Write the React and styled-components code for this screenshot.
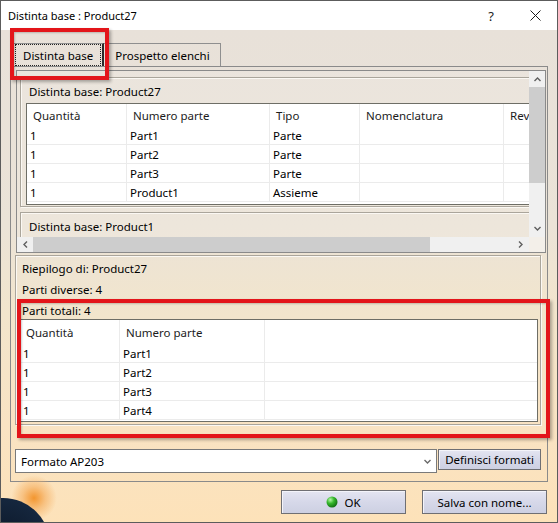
import React from 'react';
import styled, { createGlobalStyle } from 'styled-components';

const GlobalStyle = createGlobalStyle`
  html, body {
    margin: 0;
    padding: 0;
  }
  body {
    font-family: "Noto Sans", "Open Sans", sans-serif;
    font-size: 11.5px;
    color: #000;
  }
`;

const Window = styled.div`
  position: relative;
  width: 558px;
  height: 523px;
  box-sizing: border-box;
  border: 1px solid #5c5c5c;
  display: flex;
  flex-direction: column;
  overflow: hidden;
`;

const TitleBar = styled.div`
  height: 29px;
  flex-shrink: 0;
  background: #fff;
  display: flex;
  align-items: center;
  padding-left: 7px;
`;

const TitleText = styled.div`
  flex: 1;
  font-size: 11px;
`;

const TitleButton = styled.div`
  width: ${p => p.$w}px;
  height: 29px;
  display: flex;
  align-items: center;
  justify-content: center;
  font-size: 13px;
  color: #222;
`;

const Body = styled.div`
  flex: 1;
  display: flex;
  flex-direction: column;
  padding: 13px 9px 0;
  background: linear-gradient(180deg, #e8e1d9 0%, #ebe3d7 40%, #f2e5cc 58%, #f9e3c3 80%, #fde2b9 100%);
`;

const TabRow = styled.div`
  display: flex;
  margin-left: 3px;
  height: 23px;
`;

const Tab = styled.div`
  height: 23px;
  box-sizing: border-box;
  display: flex;
  align-items: center;
  padding: ${p => (p.$active ? '0 1px 0 1px' : '0 10px 0 11px')};
  border: 1px solid #8f8f8f;
  border-bottom: none;
  border-right: ${p => (p.$active ? '2px solid #2a2a2a' : '1px solid #8f8f8f')};
  ${p => !p.$active && 'border-left: none;'}
`;

const FocusLabel = styled.div`
  height: 20px;
  display: flex;
  align-items: center;
  padding: 0 7px;
  border: 1px dotted #222;
`;

const Panel = styled.div`
  height: 416px;
  box-sizing: border-box;
  border: 1px solid #8a8a8a;
  display: flex;
  flex-direction: column;
  padding: 3px 1px 0 5px;
`;

const ScrollArea = styled.div`
  height: 183px;
  box-sizing: border-box;
  border: 1px solid #8a8a8a;
  display: grid;
  grid-template-columns: 1fr 16px;
  grid-template-rows: 1fr 15px;
`;

const Viewport = styled.div`
  overflow: hidden;
  padding: 6px 0 0 3px;
  background: rgba(255, 255, 255, 0.12);
`;

const GroupList = styled.div`
  width: 620px;
  display: flex;
  flex-direction: column;
  gap: 5px;
`;

const Group = styled.div`
  border: 1px solid #aaa59b;
  box-shadow: inset 1px 1px 0 #fbf8f3, 1px 1px 0 #fbf8f3;
  padding: 0 ${p => p.$pr || 0}px ${p => p.$pb || 1}px ${p => p.$pl || 5}px;
`;

const GroupLabel = styled.div`
  height: 25px;
  box-sizing: border-box;
  padding: 6px 0 0 3px;
  line-height: 16px;
`;

const SummaryLabel = styled.div`
  height: ${p => (p.$short ? 19 : 21)}px;
  line-height: 21px;
  padding-left: 3px;
`;

const TableBox = styled.div`
  background: #fff;
  border: 1px solid #6e6e66;
  padding-bottom: ${p => p.$pb || 2}px;
  width: ${p => p.$width || 'auto'};
`;

const Row = styled.div`
  display: grid;
  grid-template-columns: ${p => p.$cols};
  height: ${p => p.$h}px;
  box-sizing: border-box;
  border-bottom: ${p => (p.$head ? 'none' : '1px solid #ebebeb')};
`;

const Cell = styled.div`
  display: flex;
  align-items: center;
  padding: ${p => (p.$head ? '0 0 0 6px' : '1px 0 0 3px')};
  border-right: 1px solid #ebebeb;
  white-space: nowrap;
  overflow: hidden;
  color: ${p => (p.$head ? '#1c1c1c' : '#000')};
  &:last-child {
    border-right: ${p => (p.$openEnd ? 'none' : '1px solid #ebebeb')};
  }
`;

const VScroll = styled.div`
  background: #f0f0f0;
  display: flex;
  flex-direction: column;
`;

const HScroll = styled.div`
  background: #f0f0f0;
  display: flex;
`;

const Corner = styled.div`
  background: #f3efe9;
`;

const ArrowBtn = styled.div`
  width: ${p => p.$w}px;
  height: ${p => p.$h}px;
  flex-shrink: 0;
  display: flex;
  align-items: center;
  justify-content: center;
`;

const Track = styled.div`
  flex: 1;
  display: flex;
  flex-direction: ${p => (p.$vertical ? 'column' : 'row')};
`;

const Thumb = styled.div`
  background: #cdcdcd;
  ${p => (p.$vertical ? `height: ${p.$size}px;` : `width: ${p.$size}px;`)}
`;

const ChevronSvg = styled.svg`
  transform: rotate(${p => p.$rot}deg);
`;

const Summary = styled(Group)`
  margin: 2px 5px 0 -1px;
  padding-top: 2px;
`;

const ComboRow = styled.div`
  display: flex;
  align-items: flex-start;
  margin: 24px 5px 0 -1px;
  gap: 1px;
`;

const Combo = styled.div`
  flex: 1;
  height: 24px;
  box-sizing: border-box;
  background: #fff;
  border: 1px solid #7a7a7a;
  display: flex;
  align-items: center;
  justify-content: space-between;
  padding: 0 4px 0 5px;
`;

const WinButton = styled.div`
  height: ${p => p.$h}px;
  width: ${p => (p.$w ? `${p.$w}px` : 'auto')};
  box-sizing: border-box;
  padding: 0 6px;
  display: flex;
  align-items: center;
  justify-content: center;
  gap: 6px;
  border: 1px solid #6f6f73;
  background: linear-gradient(180deg, #e4e5f1 0%, #d6d8e9 50%, #cdd0e2 100%);
  box-shadow: inset 1px 1px 0 #f4f4fa;
  white-space: nowrap;
`;

const Footer = styled.div`
  display: flex;
  justify-content: flex-end;
  gap: 16px;
  padding: 8px 1px 0 0;
`;

const Glow = styled.div`
  position: absolute;
  left: 10px;
  top: 474px;
  width: 46px;
  height: 46px;
  border-radius: 50%;
  background: radial-gradient(circle, rgba(243, 150, 47, 1) 0%, rgba(246, 180, 105, 0.7) 35%, rgba(253, 226, 185, 0) 70%);
`;

const Globe = styled.div`
  position: absolute;
  left: -45px;
  top: 497px;
  width: 94px;
  height: 94px;
  border-radius: 50%;
  background: radial-gradient(circle, #0b1626 0%, #162840 76%, #2c4b6d 89%, #5c84aa 96%, #a3c0d8 100%);
`;

const RedBox = styled.div`
  position: absolute;
  left: ${p => p.$x}px;
  top: ${p => p.$y}px;
  width: ${p => p.$w}px;
  height: ${p => p.$h}px;
  box-sizing: border-box;
  border: 4px solid #e3151a;
  box-shadow: 2px 2px 3px rgba(0, 0, 0, 0.3), inset 1px 1px 2px rgba(0, 0, 0, 0.2);
  pointer-events: none;
`;

const Chevron = ({ dir = 'up', color = '#5f5f5f' }) => {
  const rot = { up: 0, right: 90, down: 180, left: 270 }[dir];
  return (
    <ChevronSvg $rot={rot} width="9" height="9" viewBox="0 0 9 9">
      <polyline points="1.5,6 4.5,3 7.5,6" fill="none" stroke={color} strokeWidth="1.4" />
    </ChevronSvg>
  );
};

const Table = ({ cols, headH, head, rows, width, openEnd, pb }) => (
  <TableBox $width={width} $pb={pb}>
    <Row $cols={cols} $h={headH} $head>
      {head.map((h, i) => (
        <Cell key={i} $head $openEnd={openEnd}>{h}</Cell>
      ))}
    </Row>
    {rows.map((r, i) => (
      <Row key={i} $cols={cols} $h={19}>
        {head.map((_, j) => (
          <Cell key={j} $openEnd={openEnd}>{r[j] || ''}</Cell>
        ))}
      </Row>
    ))}
  </TableBox>
);

const bomRows = [
  ['1', 'Part1', 'Parte'],
  ['1', 'Part2', 'Parte'],
  ['1', 'Part3', 'Parte'],
  ['1', 'Product1', 'Assieme'],
];

const summaryRows = [
  ['1', 'Part1'],
  ['1', 'Part2'],
  ['1', 'Part3'],
  ['1', 'Part4'],
];

const App = () => (
  <>
    <GlobalStyle />
    <Window>
      <TitleBar>
        <TitleText>Distinta base : Product27</TitleText>
        <TitleButton $w={44}>?</TitleButton>
        <TitleButton $w={44}>
          <svg width="11" height="11" viewBox="0 0 11 11">
            <path d="M0.5 0.5 L10.5 10.5 M10.5 0.5 L0.5 10.5" stroke="#1a1a1a" strokeWidth="1" />
          </svg>
        </TitleButton>
      </TitleBar>

      <Body>
        <TabRow>
          <Tab $active>
            <FocusLabel>Distinta base</FocusLabel>
          </Tab>
          <Tab>Prospetto elenchi</Tab>
        </TabRow>

        <Panel>
          <ScrollArea>
            <Viewport>
              <GroupList>
                <Group>
                  <GroupLabel>Distinta base: Product27</GroupLabel>
                  <Table
                    cols="100px 143px 90px 144px 80px"
                    headH={22}
                    head={['Quantità', 'Numero parte', 'Tipo', 'Nomenclatura', 'Revisione']}
                    rows={bomRows}
                    width="557px"
                  />
                </Group>
                <Group>
                  <GroupLabel>Distinta base: Product1</GroupLabel>
                </Group>
              </GroupList>
            </Viewport>
            <VScroll>
              <ArrowBtn $w={16} $h={16}><Chevron dir="up" /></ArrowBtn>
              <Track $vertical>
                <Thumb $vertical $size={96} />
              </Track>
              <ArrowBtn $w={16} $h={17}><Chevron dir="down" /></ArrowBtn>
            </VScroll>
            <HScroll>
              <ArrowBtn $w={16} $h={15}><Chevron dir="left" /></ArrowBtn>
              <Track>
                <Thumb $size={397} />
              </Track>
              <ArrowBtn $w={17} $h={15}><Chevron dir="right" /></ArrowBtn>
            </HScroll>
            <Corner />
          </ScrollArea>

          <Summary $pl={3} $pr={2} $pb={2}>
            <SummaryLabel>Riepilogo di: Product27</SummaryLabel>
            <SummaryLabel>Parti diverse: 4</SummaryLabel>
            <SummaryLabel $short>Parti totali: 4</SummaryLabel>
            <Table
              cols="100px 145px 1fr"
              headH={24}
              head={['Quantità', 'Numero parte', '']}
              rows={summaryRows}
              openEnd
              pb={1}
            />
          </Summary>

          <ComboRow>
            <Combo>
              <span>Formato AP203</span>
              <Chevron dir="down" color="#6a6a6a" />
            </Combo>
            <WinButton $h={21}>Definisci formati</WinButton>
          </ComboRow>
        </Panel>

        <Footer>
          <WinButton $h={24} $w={125}>
            <svg width="12" height="12" viewBox="0 0 12 12">
              <defs>
                <radialGradient id="okg" cx="0.35" cy="0.3" r="0.75">
                  <stop offset="0" stopColor="#b8f7a8" />
                  <stop offset="0.45" stopColor="#36b82c" />
                  <stop offset="1" stopColor="#0e6a10" />
                </radialGradient>
              </defs>
              <circle cx="6" cy="6" r="5.5" fill="url(#okg)" />
            </svg>
            OK
          </WinButton>
          <WinButton $h={24} $w={125}>Salva con nome...</WinButton>
        </Footer>
      </Body>

      <Glow />
      <Globe />

      <RedBox $x={9} $y={27} $w={99} $h={52} />
      <RedBox $x={16} $y={298} $w={533} $h={139} />
    </Window>
  </>
);

export default App;
